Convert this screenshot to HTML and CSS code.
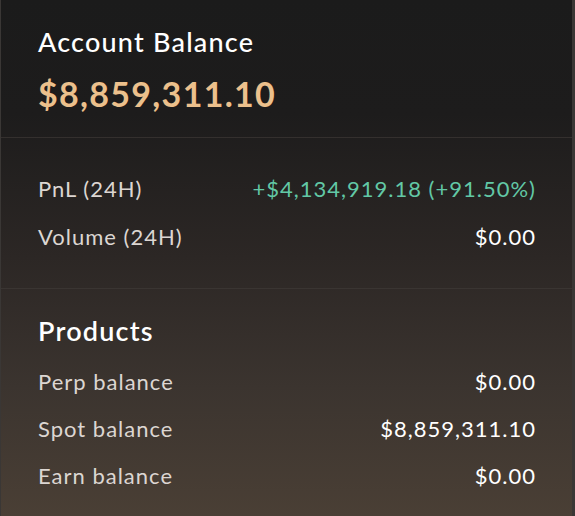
FILE: index.html
```html
<!DOCTYPE html>
<html>
<head>
<meta charset="utf-8">
<link rel="stylesheet" href="styles.css">
</head>
<body>
<div class="card">
  <section class="head">
    <div class="title">Account Balance</div>
    <div class="balance">$8,859,311.10</div>
  </section>
  <section class="stats">
    <div class="row"><span class="label">PnL (24H)</span><span class="value up">+$4,134,919.18 (+91.50%)</span></div>
    <div class="row"><span class="label">Volume (24H)</span><span class="value">$0.00</span></div>
  </section>
  <section class="products">
    <div class="subtitle">Products</div>
    <div class="row"><span class="label">Perp balance</span><span class="value">$0.00</span></div>
    <div class="row"><span class="label">Spot balance</span><span class="value">$8,859,311.10</span></div>
    <div class="row"><span class="label">Earn balance</span><span class="value">$0.00</span></div>
  </section>
</div>
</body>
</html>
```

FILE: styles.css
```css
* { box-sizing: border-box; }
html, body { margin: 0; padding: 0; }
body {
  width: 575px;
  height: 516px;
  overflow: hidden;
  background: #3a3735;
  font-family: "Lato", "Noto Sans", sans-serif;
}
.card {
  margin-left: 1px;
  width: 571px;
  height: 516px;
  background: linear-gradient(180deg, #1b1b1b 0%, #1d1c1c 22%, #2c2725 50%, #3b342f 75%, #4a3f35 100%);
  display: flex;
  flex-direction: column;
}
.head {
  height: 138px;
  padding: 26px 37px 0;
  border-bottom: 1px solid #34302e;
}
.title {
  color: #ffffff;
  font-size: 27px;
  font-weight: 500;
  line-height: 32px;
  letter-spacing: 1.2px;
}
.balance {
  margin-top: 16px;
  color: #ecc08c;
  font-size: 34px;
  font-weight: 700;
  line-height: 40px;
  letter-spacing: 1.3px;
}
.stats {
  height: 151px;
  padding: 39px 37px 0;
  border-bottom: 1px solid #3a3532;
  display: flex;
  flex-direction: column;
  gap: 24px;
}
.row {
  display: flex;
  justify-content: space-between;
  align-items: center;
  height: 24px;
  font-size: 22px;
  line-height: 24px;
  letter-spacing: 1px;
}
.value { margin-right: -1px; }
.label { color: #dcd6d2; }
.value { color: #ffffff; }
.value.up { color: #62c8a6; }
.products {
  flex: 1;
  padding: 26px 37px 0;
  display: flex;
  flex-direction: column;
  gap: 23px;
}
.subtitle {
  color: #ffffff;
  font-size: 27px;
  font-weight: 600;
  line-height: 32px;
  letter-spacing: 1.2px;
}
```
